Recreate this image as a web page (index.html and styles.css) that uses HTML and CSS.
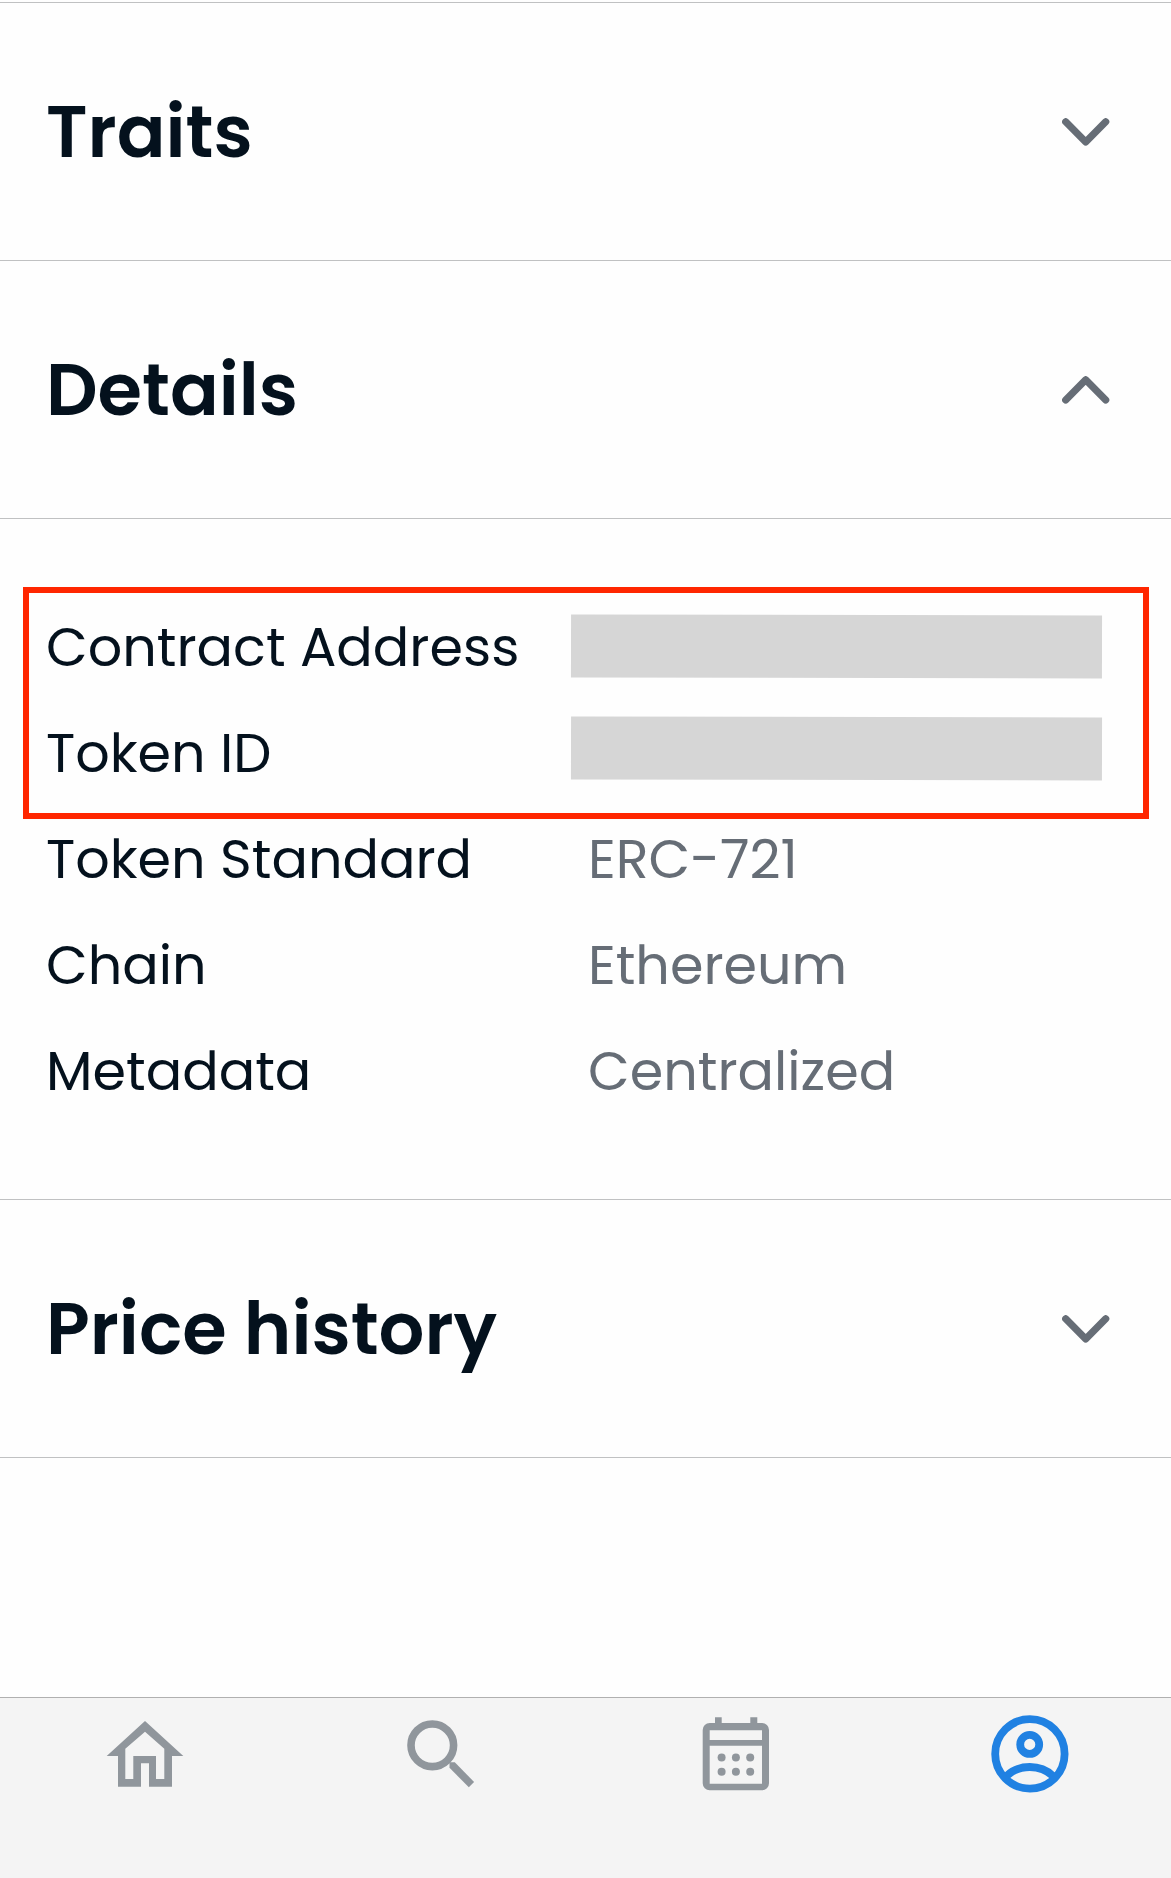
FILE: index.html
```html
<!DOCTYPE html>
<html lang="en">
<head>
  <meta charset="UTF-8">
  <meta name="viewport" content="width=device-width, initial-scale=1.0">
  <title>Item details</title>
  <link rel="stylesheet" href="styles.css">
</head>
<body>
  <div class="page">
    <main class="panels">
      <section class="panel">
        <div class="panel-header">
          <h2 class="title">Traits</h2>
          <svg class="chevron" viewBox="0 0 48 28"><path d="M3.7 3.8 L23.7 24 L43.7 3.8" /></svg>
        </div>
      </section>

      <section class="panel">
        <div class="panel-header">
          <h2 class="title">Details</h2>
          <svg class="chevron" viewBox="0 0 48 28"><path d="M3.7 24 L23.7 3.8 L43.7 24" /></svg>
        </div>
        <div class="panel-body">
          <div class="row">
            <div class="label">Contract Address</div>
            <div class="value"><div class="redacted"></div></div>
          </div>
          <div class="row">
            <div class="label">Token ID</div>
            <div class="value"><div class="redacted raised"></div></div>
          </div>
          <div class="row">
            <div class="label">Token Standard</div>
            <div class="value">ERC-721</div>
          </div>
          <div class="row">
            <div class="label">Chain</div>
            <div class="value">Ethereum</div>
          </div>
          <div class="row">
            <div class="label">Metadata</div>
            <div class="value">Centralized</div>
          </div>
          <div class="highlight"></div>
        </div>
      </section>

      <section class="panel">
        <div class="panel-header">
          <h2 class="title">Price history</h2>
          <svg class="chevron" viewBox="0 0 48 28"><path d="M3.7 3.8 L23.7 24 L43.7 3.8" /></svg>
        </div>
      </section>
    </main>

    <nav class="tab-bar">
      <svg class="tab" viewBox="0 0 90 90">
        <path fill="currentColor" fill-rule="evenodd" d="M45 12 L83.3 47 H72 V77.7 H49 V54.3 H41 V77.7 H18 V47 H6.7 Z M45 22.7 L64.3 39.7 V70 H56 V47 H33.3 V70 H25.3 V39.7 Z" />
      </svg>
      <svg class="tab" viewBox="0 0 90 90">
        <circle cx="37.3" cy="36.3" r="21.3" fill="none" stroke="currentColor" stroke-width="7.6" />
        <path fill="currentColor" d="M54.5 53.3 H59.8 L79.1 73 L73.8 78.3 L54.5 58.7 Z" />
      </svg>
      <svg class="tab" viewBox="0 0 90 90">
        <path fill="currentColor" fill-rule="evenodd" d="M25 8.3 H31.7 V14 H60.3 V8.3 H67.3 V14 H72 A7 7 0 0 1 79 21 V74.3 A7 7 0 0 1 72 81.3 H19.7 A7 7 0 0 1 12.7 74.3 V21 A7 7 0 0 1 19.7 14 H25 Z M19.7 21.3 V31 H72 V21.3 Z M19.7 36.7 V74.7 H72 V36.7 Z" />
        <g fill="currentColor">
          <circle cx="31.6" cy="48.4" r="4" />
          <circle cx="45.9" cy="48.4" r="4" />
          <circle cx="60.2" cy="48.4" r="4" />
          <circle cx="31.6" cy="62.7" r="4" />
          <circle cx="45.9" cy="62.7" r="4" />
          <circle cx="60.2" cy="62.7" r="4" />
        </g>
      </svg>
      <svg class="tab active" viewBox="0 0 90 90">
        <g fill="none" stroke="currentColor" stroke-width="7.8">
          <circle cx="44.9" cy="44.9" r="34.7" />
          <circle cx="44.7" cy="35.4" r="9.5" />
          <path d="M21.5 67 C34 55 55.5 55 68 67" />
        </g>
      </svg>
    </nav>
  </div>
</body>
</html>
```
FILE: styles.css
```css
* {
  box-sizing: border-box;
  margin: 0;
  padding: 0;
}

body {
  background-color: #fefefe;
  color: #04111d;
  font-family: "Poppins", "Inter", sans-serif;
}

.page {
  display: flex;
  flex-direction: column;
  height: 1878px;
  padding-top: 2px;
}

.panels {
  flex: 1;
  border-top: 1px solid #c0c1c2;
}

.panel-header {
  display: flex;
  align-items: center;
  justify-content: space-between;
  height: 258px;
  padding: 0 61px 0 46px;
  border-bottom: 1px solid #c0c1c2;
}

.title {
  padding-top: 1px;
  font-size: 72px;
  font-weight: 600;
  line-height: 1;
}

.chevron {
  width: 48px;
  height: 28px;

  & > path {
    fill: none;
    stroke: #666d76;
    stroke-width: 7.2;
    stroke-linecap: round;
    stroke-linejoin: round;
  }
}

.panel-body {
  position: relative;
  height: 681px;
  padding: 75px 46px 0;
  border-bottom: 1px solid #c0c1c2;
}

.row {
  display: grid;
  grid-template-columns: 542px 1fr;
  align-items: center;
  height: 106px;
  font-size: 54px;
  line-height: 56px;
  white-space: nowrap;
}

.value {
  color: #666d76;
}

.redacted {
  width: 531px;
  height: 63px;
  margin: 0 0 2px -17px;
  background-color: #d6d6d6;
  transform: rotate(0.1deg);

  &.raised {
    margin-bottom: 10px;
  }
}

.highlight {
  position: absolute;
  top: 68px;
  left: 23px;
  width: 1126px;
  height: 232px;
  border: 6px solid #ff2600;
}

.tab-bar {
  display: flex;
  justify-content: space-between;
  height: 181px;
  padding: 11px 95.5px 0 100px;
  background-color: #f4f4f4;
  border-top: 1px solid #b0b0b0;
}

.tab {
  width: 90px;
  height: 90px;
  color: #90969c;

  &.active {
    color: #2081e2;
  }
}
```
